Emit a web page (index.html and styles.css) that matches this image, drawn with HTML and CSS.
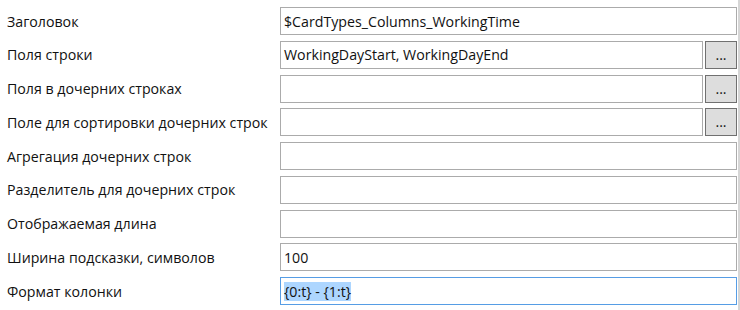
FILE: index.html
```html
<!DOCTYPE html>
<html lang="ru">
<head>
    <meta charset="UTF-8">
    <meta name="viewport" content="width=device-width, initial-scale=1.0">
    <title>Свойства колонки</title>
    <link rel="stylesheet" href="styles.css">
</head>
<body>
    <div class="panel">
        <div class="form">
            <label class="label">Заголовок</label>
            <div class="field"><div class="box">$CardTypes_Columns_WorkingTime</div></div>

            <label class="label">Поля строки</label>
            <div class="field">
                <div class="box">WorkingDayStart, WorkingDayEnd</div>
                <button class="pick">...</button>
            </div>

            <label class="label">Поля в дочерних строках</label>
            <div class="field">
                <div class="box"></div>
                <button class="pick">...</button>
            </div>

            <label class="label">Поле для сортировки дочерних строк</label>
            <div class="field">
                <div class="box"></div>
                <button class="pick">...</button>
            </div>

            <label class="label">Агрегация дочерних строк</label>
            <div class="field"><div class="box"></div></div>

            <label class="label">Разделитель для дочерних строк</label>
            <div class="field"><div class="box"></div></div>

            <label class="label">Отображаемая длина</label>
            <div class="field"><div class="box"></div></div>

            <label class="label">Ширина подсказки, символов</label>
            <div class="field"><div class="box">100</div></div>

            <label class="label">Формат колонки</label>
            <div class="field"><div class="box focused"><span class="selected">{0:t} - {1:t}</span></div></div>
        </div>
        <div class="edge"></div>
    </div>
</body>
</html>
```

FILE: styles.css
```css
body {
    margin: 0;
    background: #ffffff;
    font-family: "Open Sans", "Noto Sans", sans-serif;
    font-size: 14.2px;
    color: #111111;
}

.panel {
    display: flex;
    height: 310px;
}

.form {
    flex: 1;
    display: grid;
    grid-template-columns: 273px 1fr;
    grid-auto-rows: 28px;
    row-gap: 5.75px;
    padding: 7px 1px 0 7px;
}

.label {
    display: flex;
    align-items: center;
    white-space: nowrap;
}

.field {
    display: flex;
    gap: 2px;
}

.box {
    flex: 1;
    display: flex;
    align-items: center;
    padding: 0 3px;
    border: 1px solid #ababab;
    background: #ffffff;
    white-space: nowrap;
}

.box.focused {
    border-color: #569de5;
}

.selected {
    background: #add6ff;
}

.pick {
    width: 32px;
    padding: 0 0 4px;
    border: 1px solid #707070;
    background: #dddddd;
    font-family: inherit;
    font-size: 14.2px;
    color: #111111;
    display: flex;
    align-items: flex-end;
    justify-content: center;
}

.edge {
    width: 2px;
    background: #d6d6d6;
}
```
